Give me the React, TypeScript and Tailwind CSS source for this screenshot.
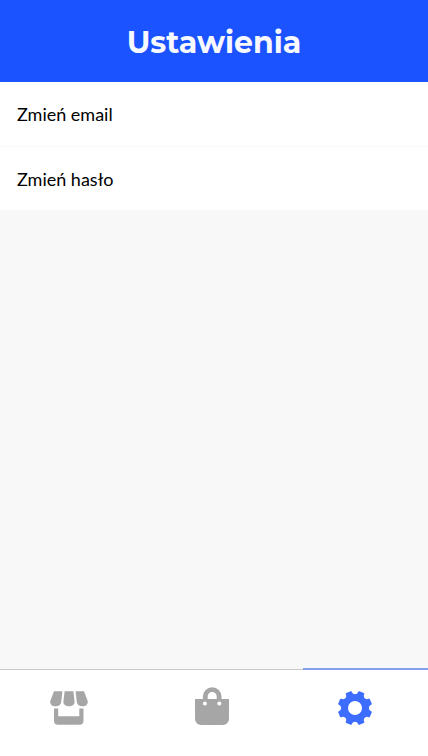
import React from "react";

const rows = ["Zmień email", "Zmień hasło"];

function StoreIcon() {
  return (
    <svg width="38" height="34" viewBox="0 0 38 34" fill="currentColor" aria-hidden="true">
      <path d="M4 0.3h8.4l-1.2 10.6c-.3 2.5-2.5 4.4-5.6 4.4-3.7 0-6-2.6-5.2-5.6z" />
      <path d="M14.6.3h8.8l1.2 10.4c.2 2.5-2.2 4.6-5.6 4.6s-5.8-2.1-5.6-4.6z" />
      <path d="M25.6.3H34l3.6 9.4c.8 3-1.5 5.6-5.2 5.6-3.1 0-5.3-1.9-5.6-4.4z" />
      <path d="M4 17.5h4.2v7.7h21.1v-7.7h4.2v12.2a4 4 0 0 1-4 4H8a4 4 0 0 1-4-4z" />
    </svg>
  );
}

function BagIcon() {
  return (
    <svg width="34" height="38" viewBox="0 0 34 38" fill="currentColor" aria-hidden="true">
      <path d="M10.3 13V9.5a6.9 6.9 0 0 1 13.8 0V13" fill="none" stroke="currentColor" strokeWidth="4.8" />
      <path
        fillRule="evenodd"
        d="M0 12h34v20a6 6 0 0 1-6 6H6a6 6 0 0 1-6-6zM9.9 14.4a2 2 0 1 0 0 4 2 2 0 0 0 0-4zM24.3 14.4a2 2 0 1 0 0 4 2 2 0 0 0 0-4z"
      />
    </svg>
  );
}

function point(radius: number, degrees: number) {
  const a = (degrees * Math.PI) / 180;
  return `${(17 + radius * Math.cos(a)).toFixed(2)} ${(17 + radius * Math.sin(a)).toFixed(2)}`;
}

// Eight rounded teeth with a scooped notch between each pair.
const gearPath =
  [0, 1, 2, 3, 4, 5, 6, 7]
    .map((k) => {
      const c = 22.5 + 45 * k;
      return `${k === 0 ? "M" : "L"}${point(16.3, c - 8)}L${point(16.3, c + 8)}A4.3 4.3 0 0 0 ${point(16.3, c + 37)}`;
    })
    .join("") + "ZM17 9a8 8 0 1 0 0 16 8 8 0 0 0 0-16Z";

function GearIcon() {
  return (
    <svg width="34" height="34" viewBox="0 0 34 34" fill="currentColor" aria-hidden="true">
      <path d={gearPath} fillRule="evenodd" stroke="currentColor" strokeWidth="2" strokeLinejoin="round" />
    </svg>
  );
}

const tabs = [
  { label: "Sklep", Icon: StoreIcon, active: false },
  { label: "Koszyk", Icon: BagIcon, active: false },
  { label: "Ustawienia", Icon: GearIcon, active: true },
];

export default function App() {
  return (
    <div className="flex min-h-screen flex-col bg-[#f8f8f8] font-['Lato',sans-serif]">
      <header className="bg-[#1a53ff] pt-[22px] pb-[18px] text-center">
        <h1 className="font-['Montserrat','Inter',sans-serif] text-[30px] leading-[42px] font-bold text-[#f8f8ff]">
          Ustawienia
        </h1>
      </header>
      <main className="flex-1">
        <ul className="bg-white">
          {rows.map((row) => (
            <li key={row} className="h-16 border-t border-[#f8f8f8] first:border-t-0">
              <button type="button" className="block h-full w-full px-[17px] text-left text-lg text-black">
                {row}
              </button>
            </li>
          ))}
        </ul>
      </main>
      <nav className="grid grid-cols-3 border-t border-[#c8c8c8] bg-white">
        {tabs.map(({ label, Icon, active }) => (
          <button
            key={label}
            type="button"
            aria-label={label}
            aria-current={active ? "page" : undefined}
            className={
              active
                ? "relative flex h-[86px] items-end justify-center pr-1 pb-[31px] text-[#3d6dff]"
                : "flex h-[86px] items-end justify-center pr-1 pb-[31px] text-[#a6a6a6]"
            }
          >
            {active && <span className="absolute -top-0.5 right-0 left-[18px] h-0.5 bg-[#84a0ea]" />}
            <Icon />
          </button>
        ))}
      </nav>
    </div>
  );
}
